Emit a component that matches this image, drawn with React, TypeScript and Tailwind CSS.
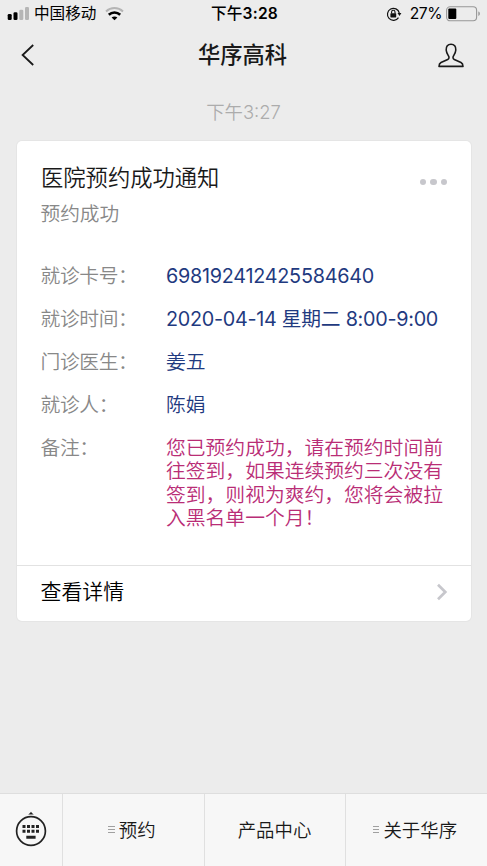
import type { ReactNode } from "react";

type Field = {
	label: string;
	value: string;
	valueClass?: string;
};

const fields: Field[] = [
	{
		label: "就诊卡号：",
		value: "698192412425584640",
		valueClass: "font-normal tracking-[-0.25px]",
	},
	{
		label: "就诊时间：",
		value: "2020-04-14 星期二 8:00-9:00",
		valueClass: "font-normal tracking-[-0.28px]",
	},
	{ label: "门诊医生：", value: "姜五" },
	{ label: "就诊人：", value: "陈娟" },
];

const remark = [
	"您已预约成功，请在预约时间前",
	"往签到，如果连续预约三次没有",
	"签到，则视为爽约，您将会被拉",
	"入黑名单一个月！",
];

function StatusBar() {
	return (
		<div className="grid h-[27px] grid-cols-[1fr_auto_1fr] items-center text-[15.6px] leading-none text-black">
			<div className="flex items-center pl-[7px]">
				<svg width="22" height="14" viewBox="0 0 22 14">
					<rect x="0.7" y="7" width="4" height="6" rx="1.3" />
					<rect x="6.5" y="5.2" width="4" height="7.8" rx="1.3" />
					<rect x="12.3" y="2.7" width="4" height="10.3" rx="1.3" fill="#b5b5b5" />
					<rect x="18" y="0" width="4" height="13" rx="1.3" fill="#b5b5b5" />
				</svg>
				<span className="ml-[5px]">中国移动</span>
				<svg className="ml-[9px]" width="19" height="14" viewBox="0 0 19 14" fill="none">
					<path d="M1 4.4C5.8 0 13.2 0 18 4.4" stroke="#b5b5b5" strokeWidth="2" />
					<path d="M3.8 7.7C7.1 4.7 11.9 4.7 15.2 7.7" stroke="#000" strokeWidth="2.6" />
					<path d="M6.6 10.6C8.3 9.2 10.7 9.2 12.4 10.6L9.5 13.2Z" fill="#000" />
				</svg>
			</div>
			<div className="pl-[2px] font-semibold tracking-[0.2px]">
				<span className="font-medium">下午</span>3:28
			</div>
			<div className="flex items-center justify-end pr-[6px]">
				<svg width="16" height="16" viewBox="0 0 16 16" fill="none">
					<path d="M12.5 11.6A6 6 0 1 1 13.3 7" stroke="#111" strokeWidth="1.2" />
					<path d="M11.5 7H15.4L13.5 10Z" fill="#111" />
					<rect x="4.4" y="7.2" width="5.8" height="4.2" rx="0.6" fill="#111" />
					<path d="M5.6 7.4V6A1.7 1.7 0 0 1 9 6V7.4" stroke="#111" strokeWidth="1.1" />
				</svg>
				<span className="ml-[8px] tracking-[-0.5px]">27%</span>
				<svg className="ml-[4px]" width="35" height="16" viewBox="0 0 35 16" fill="none">
					<rect x="0.6" y="0.8" width="30" height="14" rx="3.5" stroke="#979797" strokeWidth="1.1" />
					<rect x="2.3" y="2.6" width="8" height="10.4" rx="1" fill="#000" />
					<path d="M32.3 5.6C34.4 6.2 34.4 9.4 32.3 10Z" fill="#979797" />
				</svg>
			</div>
		</div>
	);
}

function NavBar() {
	return (
		<header className="flex h-[56px] items-center justify-between pr-[23px] pl-[20px] text-[#191919]">
			<svg className="w-[26px]" height="24" viewBox="0 0 26 24" fill="none">
				<path d="M13.2 2L2.6 12L13.2 22" stroke="currentColor" strokeWidth="1.8" />
			</svg>
			<h1 className="pl-[1px] text-[22.3px] leading-none font-medium">华序高科</h1>
			<svg width="26" height="25" viewBox="0 0 26 25" fill="none">
				<path
					d="M13 1.2C16.3 1.2 18 3.7 17.8 7C17.7 9.7 16.4 11.5 15.5 12.9C14.7 14.2 14.8 15.7 16.3 16.5L23 19.5C24.6 20.3 25 21.2 25 23.4H1C1 21.2 1.4 20.3 3 19.5L9.7 16.5C11.2 15.7 11.3 14.2 10.5 12.9C9.6 11.5 8.3 9.7 8.2 7C8 3.7 9.7 1.2 13 1.2Z"
					stroke="currentColor"
					strokeWidth="1.6"
					strokeLinejoin="round"
				/>
			</svg>
		</header>
	);
}

function FieldRow({ label, children }: { label: string; children: ReactNode }) {
	return (
		<div className="grid grid-cols-[125.5px_1fr] whitespace-nowrap">
			<dt className="tracking-[-0.4px] text-[#888]">{label}</dt>
			<dd>{children}</dd>
		</div>
	);
}

function NoticeCard() {
	return (
		<article className="mr-[16.5px] ml-[16.5px] flex h-[480px] flex-col rounded-[5px] bg-white shadow-[0_0_1px_1px_rgba(0,0,0,0.03)]">
			<div className="flex items-center justify-between pt-[24px] pr-[23.5px] pl-[24.5px]">
				<h2 className="text-[22.3px] leading-[26px] font-[350] text-[#191919]">
					医院预约成功通知
				</h2>
				<div className="mt-[8px] flex gap-[4px]">
					<span className="size-[6.5px] rounded-full bg-[#c7c7cc]" />
					<span className="size-[6.5px] rounded-full bg-[#c7c7cc]" />
					<span className="size-[6.5px] rounded-full bg-[#c7c7cc]" />
				</div>
			</div>
			<p className="mt-[11px] pl-[24px] text-[19.7px] leading-[24px] font-[350] text-[#888]">
				预约成功
			</p>
			<dl className="mt-[39px] flex flex-col gap-[19.6px] pl-[24px] text-[19.8px] leading-[23.4px] font-[350]">
				{fields.map((field) => (
					<FieldRow key={field.label} label={field.label}>
						<span className={`text-[#1f3a80] ${field.valueClass ?? ""}`}>
							{field.value}
						</span>
					</FieldRow>
				))}
				<FieldRow label="备注：">
					<div className="text-[#b92d76]">
						{remark.map((line) => (
							<p key={line}>{line}</p>
						))}
					</div>
				</FieldRow>
			</dl>
			<a
				href="#"
				className="mt-auto flex h-[56px] items-center justify-between border-t border-[#e2e2e2] pr-[23px] pl-[24px] text-[20.9px] font-[350] text-black"
			>
				<span className="pb-[4px]">查看详情</span>
				<svg className="mb-[3px]" width="12" height="18" viewBox="0 0 12 18" fill="none">
					<path d="M2 1.8L9.3 9L2 16.2" stroke="#c7c7cc" strokeWidth="2.7" />
				</svg>
			</a>
		</article>
	);
}

function MenuItem({ label, hasSubmenu }: { label: string; hasSubmenu?: boolean }) {
	return (
		<button
			type="button"
			className="flex items-center justify-center gap-[4px] border-l border-[#e0e0e0] pr-[3px] text-[18.4px] leading-none font-[350] text-[#191919] nth-3:pr-[1px]"
		>
			{hasSubmenu && (
				<span className="mb-[2px] flex w-[6.5px] flex-col gap-[2px]">
					<span className="h-px bg-[#a0a0a0]" />
					<span className="h-px bg-[#a0a0a0]" />
					<span className="h-px bg-[#a0a0a0]" />
				</span>
			)}
			{label}
		</button>
	);
}

function BottomMenu() {
	return (
		<nav className="grid h-[73px] grid-cols-[62px_142px_141px_1fr] border-t border-[#dedede] bg-[#f7f7f7]">
			<button type="button" className="flex items-center justify-center pb-[2px]">
				<svg width="32" height="36" viewBox="0 0 32 36" fill="none">
					<circle cx="16" cy="20" r="14.4" stroke="#222" strokeWidth="1.7" />
					<path d="M12.8 3.6C14 3.2 15 2.2 16 0.8C17 2.2 18 3.2 19.2 3.6Z" fill="#222" />
					<path
						d="M7.5 14h3v3h-3zM12 14h3v3h-3zM16.5 14h3v3h-3zM21 14h3v3h-3zM7.5 18.7h3v3h-3zM12 18.7h3v3h-3zM16.5 18.7h3v3h-3zM21 18.7h3v3h-3zM11.3 24.7h9.3v3h-9.3z"
						fill="#222"
					/>
				</svg>
			</button>
			<MenuItem label="预约" hasSubmenu />
			<MenuItem label="产品中心" />
			<MenuItem label="关于华序" hasSubmenu />
		</nav>
	);
}

export default function App() {
	return (
		<div className="flex h-screen flex-col overflow-hidden bg-[#ececec] font-[Inter,'Noto_Sans_CJK_SC',sans-serif]">
			<StatusBar />
			<NavBar />
			<main className="flex-1">
				<p className="mt-[19px] mb-[19px] text-center text-[18.4px] leading-[20px] font-[350] text-[#acacac]">
					下午3:27
				</p>
				<NoticeCard />
			</main>
			<BottomMenu />
		</div>
	);
}
